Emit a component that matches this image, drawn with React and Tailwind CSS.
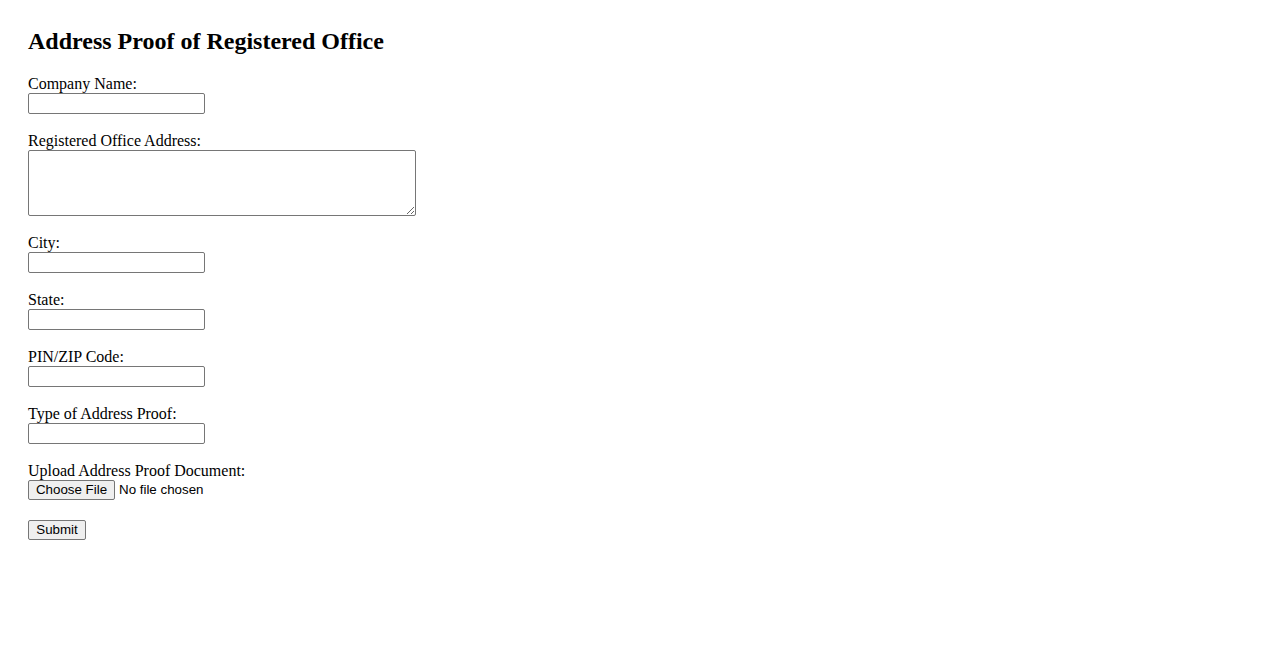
export default function App() {
  const field = (label) => (
    <div className="flex flex-col items-start mb-[18px]">
      <label className="block text-[16px] leading-[18px]">{label}</label>
      <input type="text" className="block w-[177px] h-[21px] border border-[#767676] rounded-[2px] bg-white px-[2px] outline-none" />
    </div>
  );
  return (
    <div className="min-h-[650px] bg-white pt-[28px] px-[28px] font-['Liberation_Serif',serif] text-black">
      <h2 className="text-[24px] font-bold leading-[27px] mb-[20px]">Address Proof of Registered Office</h2>
      <form className="flex flex-col items-start" onSubmit={(e) => e.preventDefault()}>
        {field("Company Name:")}
        <div className="flex flex-col items-start mb-[18px]">
          <label className="block text-[16px] leading-[18px]">Registered Office Address:</label>
          <textarea className="block w-[388px] h-[66px] border border-[#767676] rounded-[2px] bg-white outline-none resize" />
        </div>
        {field("City:")}
        {field("State:")}
        {field("PIN/ZIP Code:")}
        {field("Type of Address Proof:")}
        <div className="flex flex-col items-start mb-[20px]">
          <label className="block text-[16px] leading-[18px]">Upload Address Proof Document:</label>
          <div className="flex items-center h-[20px] font-['Liberation_Sans',Arial,sans-serif] text-[13.33px]">
            <button type="button" className="h-[20px] w-[87px] flex items-center justify-center border border-[#767676] rounded-[2px] bg-[#efefef] text-black leading-none">Choose File</button>
            <span className="ml-[4px] leading-none">No file chosen</span>
          </div>
        </div>
        <button type="submit" className="h-[20px] w-[58px] flex items-center justify-center border border-[#767676] rounded-[2px] bg-[#efefef] text-black font-['Liberation_Sans',Arial,sans-serif] text-[13.33px] leading-none">Submit</button>
      </form>
    </div>
  );
}
